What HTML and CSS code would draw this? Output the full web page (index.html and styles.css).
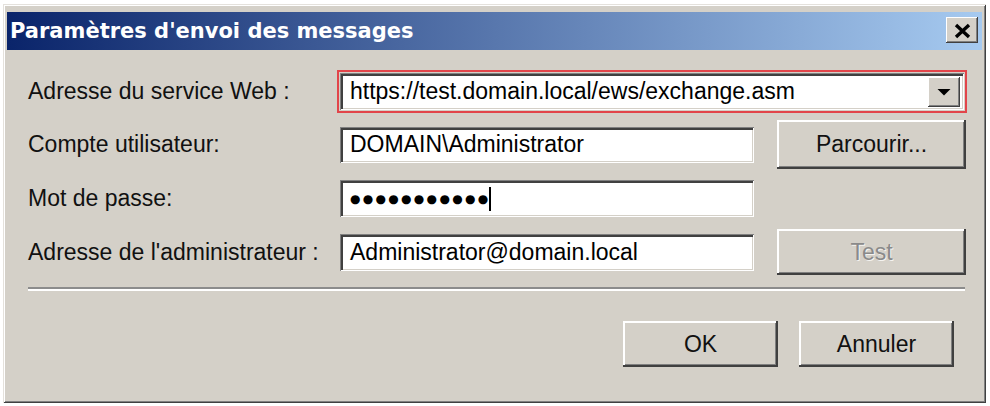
FILE: index.html
```html
<!DOCTYPE html>
<html lang="fr">
<head>
<meta charset="utf-8">
<title>Paramètres d'envoi des messages</title>
<link rel="stylesheet" href="styles.css">
</head>
<body>
<div class="window">
  <div class="titlebar">
    <span class="title">Paramètres d'envoi des messages</span>
    <div class="close">
      <svg width="32" height="26" viewBox="0 0 32 26"><path d="M10 8 L23 20 M23 8 L10 20" stroke="#000" stroke-width="3.4" fill="none"/></svg>
    </div>
  </div>
  <div class="form">
    <div class="row r1">
      <span class="lbl">Adresse du service Web :</span>
      <div class="combo">
        <span class="ctext">https://test.domain.local/ews/exchange.asm</span>
        <div class="dd"><svg width="14" height="8" viewBox="0 0 14 8"><polygon points="0.5,1 13.5,1 7,7.5" fill="#000"/></svg></div>
      </div>
    </div>
    <div class="row r2">
      <span class="lbl">Compte utilisateur:</span>
      <div class="field">DOMAIN\Administrator</div>
      <div class="btn side tall">Parcourir...</div>
    </div>
    <div class="row r3">
      <span class="lbl">Mot de passe:</span>
      <div class="field wide"><span class="dots">●●●●●●●●●●●</span><span class="caret"></span></div>
    </div>
    <div class="row r4">
      <span class="lbl">Adresse de l'administrateur :</span>
      <div class="field">Administrator@domain.local</div>
      <div class="btn side disabled">Test</div>
    </div>
  </div>
  <div class="sep"></div>
  <div class="actions">
    <div class="btn action">OK</div>
    <div class="btn action">Annuler</div>
  </div>
</div>
</body>
</html>
```
FILE: styles.css
```css
html, body {
  margin: 0;
  padding: 0;
  background: #ffffff;
}

body {
  font-family: "Liberation Sans", Arial, sans-serif;
  font-size: 23px;
  color: #000;
}

.window {
  margin: 4px 0 0 3px;
  width: 983px;
  height: 399px;
  box-sizing: border-box;
  padding: 8px 4px 4px 4px;
  background: #d4d0c8;
  box-shadow:
    inset 1px 1px #e4e1dc,
    inset -1px -1px #404040,
    inset 2px 2px #ffffff,
    inset -2px -2px #808080;
}

.titlebar {
  height: 38px;
  display: flex;
  align-items: center;
  justify-content: space-between;
  padding: 0 4px 0 3px;
  background: linear-gradient(to right, #0a246a, #a6caf0);
}

.title {
  color: #ffffff;
  font-family: "DejaVu Sans", sans-serif;
  font-weight: bold;
  font-size: 21px;
  white-space: nowrap;
}

.close {
  width: 32px;
  height: 26px;
  margin-top: -2px;
  background: #d4d0c8;
  display: flex;
  align-items: center;
  justify-content: center;
  box-shadow:
    inset -1px -1px #404040,
    inset 1px 1px #ffffff,
    inset -2px -2px #808080;
}

.close svg,
.dd svg {
  display: block;
}

.form {
  padding: 20px 0 0 21px;
  display: flex;
  flex-direction: column;
}

.row {
  display: flex;
  align-items: center;
}

.r1 { height: 43px; }
.r2 { height: 49px; margin-top: 7px; }
.r3 { height: 37px; margin-top: 11px; }
.r4 { height: 46px; margin-top: 12px; }

.lbl {
  width: 312px;
  flex: none;
  white-space: nowrap;
  color: #111;
}

.field {
  width: 414px;
  height: 36px;
  flex: none;
  box-sizing: border-box;
  padding-left: 10px;
  display: flex;
  align-items: center;
  background: #ffffff;
  white-space: nowrap;
  box-shadow:
    inset 1px 1px #808080,
    inset -1px -1px #ffffff,
    inset 3px 3px #404040,
    inset -2px -2px #d4d0c8;
}

.r3 .field,
.r4 .field {
  height: 37px;
}

.combo {
  width: 624px;
  height: 37px;
  flex: none;
  box-sizing: border-box;
  padding: 3px 4px 3px 10px;
  display: flex;
  align-items: center;
  justify-content: space-between;
  background: #ffffff;
  outline: 2px solid #e2454a;
  outline-offset: 1px;
  box-shadow:
    inset 1px 1px #808080,
    inset -1px -1px #ffffff,
    inset 3px 3px #404040,
    inset -2px -2px #d4d0c8;
}

.ctext {
  white-space: nowrap;
}

.dd {
  width: 32px;
  height: 30px;
  display: flex;
  align-items: center;
  justify-content: center;
  background: #d4d0c8;
  box-shadow:
    inset -1px -1px #404040,
    inset 1px 1px #ffffff,
    inset -2px -2px #808080;
}

.dots {
  font-family: "DejaVu Sans", sans-serif;
  font-size: 12px;
  letter-spacing: 2.3px;
  color: #000;
}

.caret {
  display: inline-block;
  width: 2px;
  height: 24px;
  background: #000;
  margin-left: -1px;
}

.btn {
  box-sizing: border-box;
  display: flex;
  align-items: center;
  justify-content: center;
  background: #d4d0c8;
  color: #111;
  white-space: nowrap;
  box-shadow:
    inset -2px -2px #404040,
    inset 2px 2px #ffffff,
    inset -3px -3px #808080;
}

.side {
  width: 189px;
  height: 46px;
  margin-left: 23px;
}

.side.tall {
  height: 49px;
}

.disabled {
  color: #8a8a8a;
  text-shadow: 1px 1px #f4f3f0;
}

.sep {
  margin: 12px 17px 0 21px;
  height: 0;
  border-top: 2px solid #8c8c8c;
  border-bottom: 2px solid #ffffff;
}

.actions {
  display: flex;
  justify-content: flex-end;
  gap: 21px;
  margin-top: 30px;
  padding-right: 28px;
}

.action {
  width: 155px;
  height: 46px;
}
```
